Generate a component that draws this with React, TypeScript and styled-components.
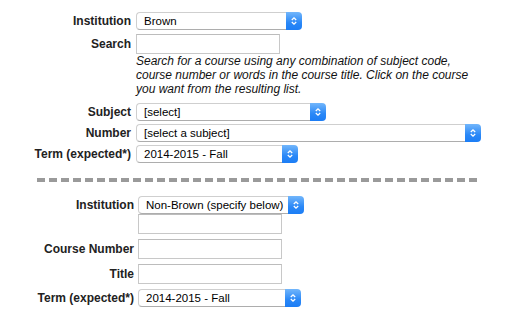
import styled, { createGlobalStyle } from "styled-components";

const GlobalStyle = createGlobalStyle`
  body {
    margin: 0;
    background: #fff;
    font-family: "Liberation Sans", Arial, sans-serif;
  }
`;

const Page = styled.div`
  width: 506px;
  padding-top: 12px;
`;

const Row = styled.div<{ $label: number; $gap: number; $top?: number }>`
  display: grid;
  grid-template-columns: ${(p) => p.$label}px auto;
  column-gap: ${(p) => p.$gap}px;
  align-items: center;
  justify-items: start;
  margin-top: ${(p) => p.$top || 0}px;
`;

const Label = styled.label`
  justify-self: end;
  font-size: 12px;
  font-weight: bold;
  color: #222;
  white-space: nowrap;
`;

const Help = styled.p`
  grid-column: 2;
  margin: 0;
  font-size: 12px;
  font-style: italic;
  line-height: 14px;
  color: #111;
  white-space: nowrap;
`;

const TextBox = styled.input`
  width: 144px;
  height: 20px;
  box-sizing: border-box;
  margin: 0;
  padding: 0 3px;
  border: 1px solid #c8c8c8;
  border-top-color: #bcbcbc;
  background: #fff;
  font-size: 12px;
  outline: none;
`;

const Popup = styled.div<{ $width: number }>`
  display: flex;
  width: ${(p) => p.$width}px;
  height: 18px;
`;

const PopupText = styled.span`
  flex: 1;
  box-sizing: border-box;
  padding-left: 7px;
  border: 1px solid #cfcfcf;
  border-bottom-color: #adadad;
  border-right: none;
  border-radius: 4px 0 0 4px;
  background: #fff;
  font-size: 11.5px;
  line-height: 16px;
  color: #000;
  white-space: nowrap;
  overflow: hidden;
`;

const Stepper = styled.span`
  width: 16px;
  display: flex;
  align-items: center;
  justify-content: center;
  border-radius: 0 4px 4px 0;
  background: linear-gradient(#72b6fb, #2a88f7 60%, #1c7df5);
`;

const Divider = styled.div`
  width: 440px;
  height: 4px;
  margin: 15px 0 14px 37px;
  background: repeating-linear-gradient(to right, #9a9a9a 0 8px, transparent 8px 12px);
`;

function Chevrons() {
  return (
    <svg width="8" height="12" viewBox="0 0 8 12">
      <path d="M1.8 5 L4 2.8 L6.2 5 M1.8 7 L4 9.2 L6.2 7" fill="none" stroke="#fff" strokeWidth="1.3" />
    </svg>
  );
}

function Select({ value, width }: { value: string; width: number }) {
  return (
    <Popup $width={width}>
      <PopupText>{value}</PopupText>
      <Stepper>
        <Chevrons />
      </Stepper>
    </Popup>
  );
}

export default function App() {
  return (
    <Page>
      <GlobalStyle />
      <Row $label={131} $gap={5}>
        <Label>Institution</Label>
        <Select value="Brown" width={166} />
      </Row>
      <Row $label={131} $gap={5} $top={4}>
        <Label>Search</Label>
        <TextBox />
      </Row>
      <Row $label={131} $gap={5}>
        <Help>
          Search for a course using any combination of subject code,
          <br />
          course number or words in the course title. Click on the course
          <br />
          you want from the resulting list.
        </Help>
      </Row>
      <Row $label={131} $gap={5} $top={7}>
        <Label>Subject</Label>
        <Select value="[select]" width={190} />
      </Row>
      <Row $label={131} $gap={5} $top={3}>
        <Label>Number</Label>
        <Select value="[select a subject]" width={345} />
      </Row>
      <Row $label={131} $gap={5} $top={3}>
        <Label>Term (expected*)</Label>
        <Select value="2014-2015 - Fall" width={162} />
      </Row>

      <Divider />

      <Row $label={134} $gap={4}>
        <Label>Institution</Label>
        <Select value="Non-Brown (specify below)" width={166} />
      </Row>
      <Row $label={134} $gap={4}>
        <span />
        <TextBox />
      </Row>
      <Row $label={134} $gap={4} $top={5}>
        <Label>Course Number</Label>
        <TextBox />
      </Row>
      <Row $label={134} $gap={4} $top={5}>
        <Label>Title</Label>
        <TextBox />
      </Row>
      <Row $label={134} $gap={4} $top={5}>
        <Label>Term (expected*)</Label>
        <Select value="2014-2015 - Fall" width={163} />
      </Row>
    </Page>
  );
}
